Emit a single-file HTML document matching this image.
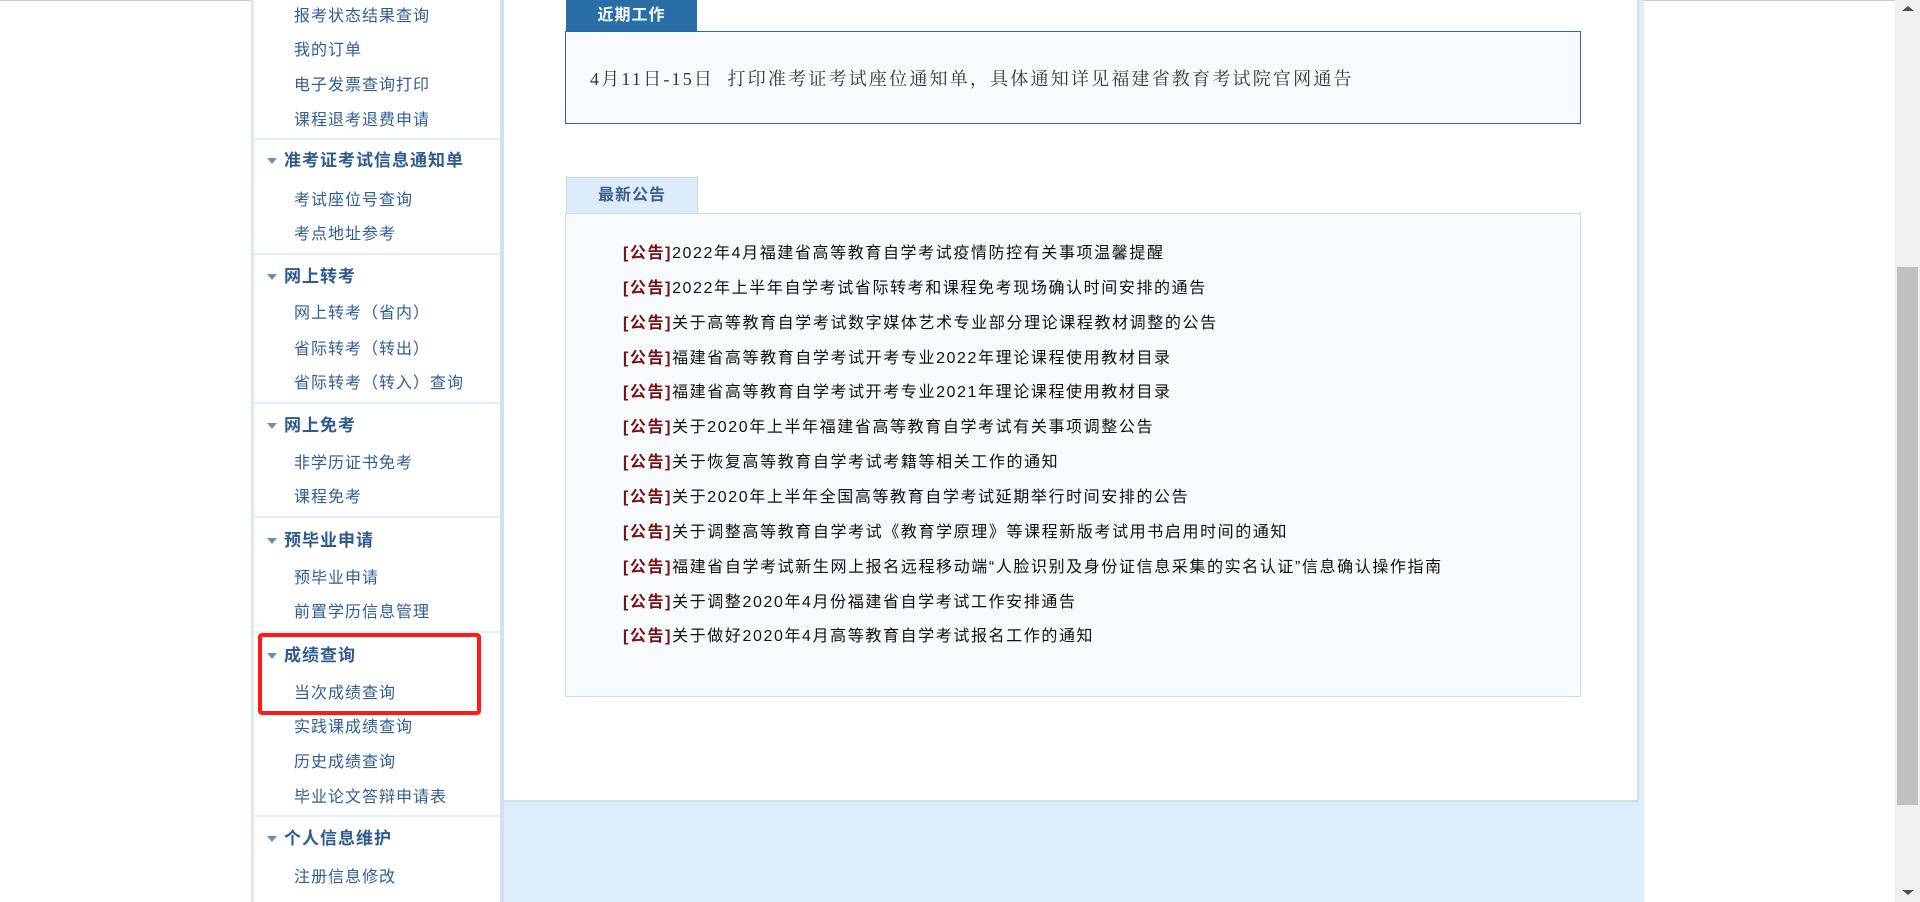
<!DOCTYPE html>
<html><head><meta charset="utf-8">
<style>
*{margin:0;padding:0;box-sizing:border-box}
html,body{width:1920px;height:902px;overflow:hidden;background:#fff;font-family:"Liberation Sans","Noto Sans CJK SC",sans-serif}
.topline{position:absolute;left:0;top:0;width:1895px;height:1px;background:#c8c8c8}
.side{position:absolute;left:251px;top:-2px;width:253px;height:904px;background:#fff;border-left:3px solid #dbe9f7;border-right:4px solid #cfe0f0}
.it{position:absolute;left:40px;font-size:16px;letter-spacing:1px;color:#2f5e96;line-height:20px;white-space:nowrap}
.hd{position:absolute;left:30px;font-size:17px;font-weight:bold;letter-spacing:1px;color:#2d5a8f;line-height:20px;white-space:nowrap}
.hd:before{content:"";position:absolute;left:-17px;top:7px;border-left:5px solid transparent;border-right:5px solid transparent;border-top:6px solid #6a8fbf}
.sep{position:absolute;left:0;width:246px;height:2px;background:#e4eef8}
.red{position:absolute;left:258px;top:633px;width:223px;height:82px;border:4px solid #ff1a1a;border-radius:4px}
.main{position:absolute;left:504px;top:0;width:1135px;height:802px;background:#fff;border-right:2px solid #cfe0dd;border-bottom:2px solid #cfe0dd}
.strip{position:absolute;left:1639px;top:0;width:5px;height:902px;background:#deedfc}
.bottom{position:absolute;left:504px;top:802px;width:1140px;height:100px;background:#deedfc}
.tab1{position:absolute;left:566px;top:0;width:131px;height:31px;background:#2a6ea8;color:#fff;font-weight:bold;font-size:16px;letter-spacing:1px;text-align:center;line-height:31px}
.box1{position:absolute;left:565px;top:31px;width:1016px;height:93px;border:1px solid #2a6aa0;background:#f7fbfe}
.box1 p{position:absolute;left:24px;top:33px;font-family:"Liberation Serif","Noto Serif CJK SC",serif;font-size:18px;color:#333;white-space:nowrap;letter-spacing:2.2px}
.tab2{position:absolute;left:566px;top:177px;width:132px;height:36px;background:#dcecfb;border:1px solid #c5d9ec;border-bottom:none;color:#3a5f8f;font-weight:bold;font-size:16px;letter-spacing:1px;text-align:center;line-height:36px}
.box2{position:absolute;left:565px;top:213px;width:1016px;height:484px;border:1px solid #c8dcec;background:#f7fbfe}
.an{position:absolute;left:57px;font-size:16px;letter-spacing:1.6px;color:#111;white-space:nowrap;line-height:20px}
.an b{color:#7a1010}
.sb{position:absolute;left:1895px;top:0;width:25px;height:902px;background:#f0f0f0}
.th{position:absolute;left:2px;top:267px;width:21px;height:538px;background:#c0c0c0}
.ar{position:absolute;left:7px;border-left:6px solid transparent;border-right:6px solid transparent}
</style></head><body>
<div class="topline"></div>
<div class="side">
<div class="it" style="top:9px">报考状态结果查询</div>
<div class="it" style="top:43px">我的订单</div>
<div class="it" style="top:78px">电子发票查询打印</div>
<div class="it" style="top:113px">课程退考退费申请</div>
<div class="sep" style="top:140px"></div>
<div class="hd" style="top:153px">准考证考试信息通知单</div>
<div class="it" style="top:193px">考试座位号查询</div>
<div class="it" style="top:227px">考点地址参考</div>
<div class="sep" style="top:255px"></div>
<div class="hd" style="top:269px">网上转考</div>
<div class="it" style="top:306px">网上转考（省内）</div>
<div class="it" style="top:342px">省际转考（转出）</div>
<div class="it" style="top:376px">省际转考（转入）查询</div>
<div class="sep" style="top:404px"></div>
<div class="hd" style="top:418px">网上免考</div>
<div class="it" style="top:456px">非学历证书免考</div>
<div class="it" style="top:490px">课程免考</div>
<div class="sep" style="top:518px"></div>
<div class="hd" style="top:533px">预毕业申请</div>
<div class="it" style="top:571px">预毕业申请</div>
<div class="it" style="top:605px">前置学历信息管理</div>
<div class="sep" style="top:633px"></div>
<div class="hd" style="top:648px">成绩查询</div>
<div class="it" style="top:686px">当次成绩查询</div>
<div class="it" style="top:720px">实践课成绩查询</div>
<div class="it" style="top:755px">历史成绩查询</div>
<div class="it" style="top:790px">毕业论文答辩申请表</div>
<div class="sep" style="top:817px"></div>
<div class="hd" style="top:831px">个人信息维护</div>
<div class="it" style="top:870px">注册信息修改</div>
</div>
<div class="red"></div>
<div class="main"></div>
<div class="strip"></div>
<div class="bottom"></div>
<div class="tab1">近期工作</div>
<div class="box1"><p>4月11日-15日&nbsp; 打印准考证考试座位通知单，具体通知详见福建省教育考试院官网通告</p></div>
<div class="tab2">最新公告</div>
<div class="box2">
<div class="an" style="top:30px"><b>[公告]</b>2022年4月福建省高等教育自学考试疫情防控有关事项温馨提醒</div>
<div class="an" style="top:65px"><b>[公告]</b>2022年上半年自学考试省际转考和课程免考现场确认时间安排的通告</div>
<div class="an" style="top:100px"><b>[公告]</b>关于高等教育自学考试数字媒体艺术专业部分理论课程教材调整的公告</div>
<div class="an" style="top:135px"><b>[公告]</b>福建省高等教育自学考试开考专业2022年理论课程使用教材目录</div>
<div class="an" style="top:169px"><b>[公告]</b>福建省高等教育自学考试开考专业2021年理论课程使用教材目录</div>
<div class="an" style="top:204px"><b>[公告]</b>关于2020年上半年福建省高等教育自学考试有关事项调整公告</div>
<div class="an" style="top:239px"><b>[公告]</b>关于恢复高等教育自学考试考籍等相关工作的通知</div>
<div class="an" style="top:274px"><b>[公告]</b>关于2020年上半年全国高等教育自学考试延期举行时间安排的公告</div>
<div class="an" style="top:309px"><b>[公告]</b>关于调整高等教育自学考试《教育学原理》等课程新版考试用书启用时间的通知</div>
<div class="an" style="top:344px"><b>[公告]</b>福建省自学考试新生网上报名远程移动端“人脸识别及身份证信息采集的实名认证”信息确认操作指南</div>
<div class="an" style="top:379px"><b>[公告]</b>关于调整2020年4月份福建省自学考试工作安排通告</div>
<div class="an" style="top:413px"><b>[公告]</b>关于做好2020年4月高等教育自学考试报名工作的通知</div>
</div>
<div class="sb"><div class="ar" style="top:6px;border-bottom:5px solid #505050"></div><div class="th"></div><div class="ar" style="top:890px;border-top:5px solid #505050"></div></div>
</body></html>
